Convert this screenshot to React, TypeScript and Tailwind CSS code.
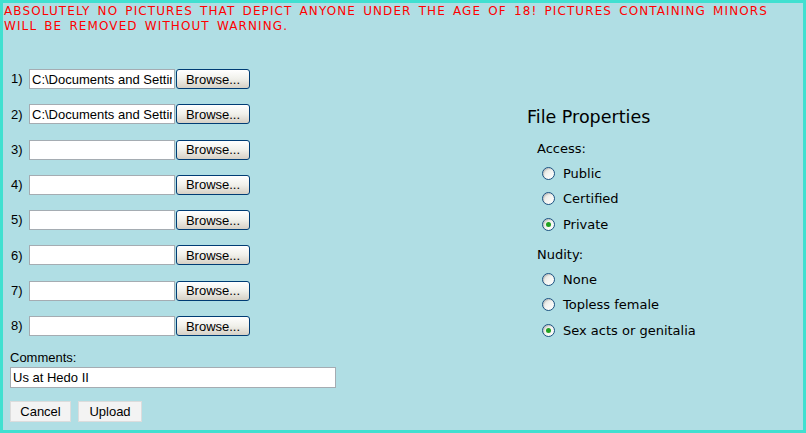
import React from 'react';

const files = [
  'C:\\Documents and Settings\\',
  'C:\\Documents and Settings\\',
  '',
  '',
  '',
  '',
  '',
  '',
];

function Radio({ checked, label }: { checked?: boolean; label: string }) {
  return (
    <div className="flex items-center h-[25.5px]">
      <span className="w-[13px] h-[13px] rounded-full border border-[#1c5180] bg-gradient-to-br from-[#dcdcd6] via-[#f4f4f1] to-white flex items-center justify-center shadow-[inset_1px_1px_1px_rgba(0,0,0,0.15)]">
        {checked && <span className="w-[5px] h-[5px] rounded-full bg-[#21a121]" />}
      </span>
      <span className="ml-[8px]">{label}</span>
    </div>
  );
}

function BrowseButton() {
  return (
    <button className="w-[74px] h-[20px] rounded-[3px] border border-[#003c74] bg-gradient-to-b from-white via-[#f0f0ea] to-[#d6d0c5] text-[13px] text-black leading-none flex items-center justify-center">
      Browse...
    </button>
  );
}

export default function App() {
  return (
    <div className="w-[806px] h-[433px] bg-[#b0dee4] border-[3px] border-[#40e0d0] relative overflow-hidden">
      <p
        className="pl-[1px] pt-[1px] text-[12px] leading-[15px] tracking-[1.1px] [word-spacing:2.2px] text-[#ff0000]"
        style={{ fontFamily: 'Verdana, "DejaVu Sans", sans-serif' }}
      >
        ABSOLUTELY NO PICTURES THAT DEPICT ANYONE UNDER THE AGE OF 18! PICTURES CONTAINING MINORS WILL BE REMOVED WITHOUT WARNING.
      </p>

      <div className="flex" style={{ fontFamily: '"Liberation Sans", Arial, sans-serif' }}>
        <div className="pl-[8px] pt-[35px] w-[440px]">
          {files.map((f, i) => (
            <div key={i} className="flex items-center h-[20px] mb-[15.3px]">
              <span className="w-[18px] text-[13px] text-black">{i + 1})</span>
              <input
                readOnly
                value={f}
                className="w-[146px] h-[20px] bg-white border border-[#a5acb2] px-[2px] text-[13px] text-black outline-none"
              />
              <span className="ml-[1px]">
                <BrowseButton />
              </span>
            </div>
          ))}
          <div className="-ml-[1px] mt-[4px]">
            <div className="text-[13px] leading-[14px] text-black">Comments:</div>
            <input
              readOnly
              value="Us at Hedo II"
              className="w-[326px] h-[21px] bg-white border border-[#a5acb2] px-[2px] text-[13px] text-black outline-none"
            />
            <div className="flex gap-[7px] mt-[12px]">
              <button className="w-[61px] h-[21px] bg-[#f3f3f3] border border-[#dcdcdc] text-[13px] text-black">Cancel</button>
              <button className="w-[64px] h-[21px] bg-[#f3f3f3] border border-[#dcdcdc] text-[13px] text-black">Upload</button>
            </div>
          </div>
        </div>

        <div className="pl-[84px] pt-[73px]" style={{ fontFamily: 'Verdana, "DejaVu Sans", sans-serif' }}>
          <div className="text-[17.5px] leading-[20px] text-black">File Properties</div>
          <div className="pl-[10px] text-[13px] text-black">
            <div className="mt-[12px] mb-[2px]">Access:</div>
            <div className="pl-[5px]">
              <Radio label="Public" />
              <Radio label="Certified" />
              <Radio checked label="Private" />
            </div>
            <div className="mt-[8px] mb-[2px]">Nudity:</div>
            <div className="pl-[5px]">
              <Radio label="None" />
              <Radio label="Topless female" />
              <Radio checked label="Sex acts or genitalia" />
            </div>
          </div>
        </div>
      </div>
    </div>
  );
}
